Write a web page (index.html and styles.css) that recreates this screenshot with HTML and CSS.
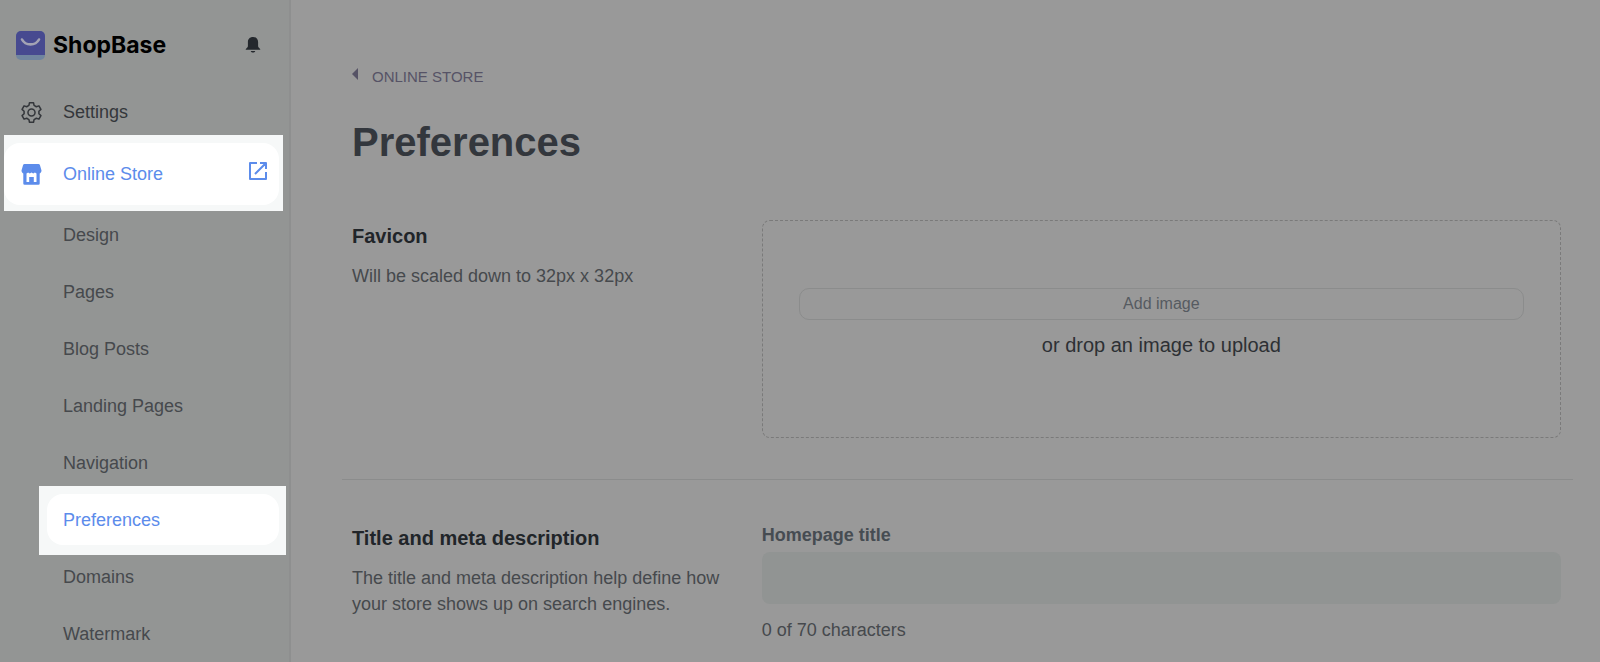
FILE: index.html
```
<!DOCTYPE html>
<html lang="en">

    <head>
        <meta charset="UTF-8">
        <meta name="viewport" content="width=device-width, initial-scale=1.0">
        <title>Preferences - ShopBase</title>

        <link rel="stylesheet" href="styles.css">
    </head>

    <body>
        <div class="layout">
            <aside class="sidebar">
                <div class="sidebar__head">
                    <a class="logo" href="#">
                        <svg class="logo__mark" viewBox="0 0 29 29" aria-hidden="true">
                            <rect width="29" height="29" rx="5" fill="#70859f" />
                            <path d="M5 0h19a5 5 0 0 1 5 5v19H0V5a5 5 0 0 1 5-5z" fill="#474a90" />
                            <path d="M6 8.500c3.500 6.500 13.500 6.500 17 0" fill="none" stroke="#a3a3b4" stroke-width="2.600" stroke-linecap="round" />
                        </svg>
                        <span>ShopBase</span>
                    </a>
                    <button class="bell" type="button" aria-label="Notifications">
                        <svg viewBox="0 0 16 16" aria-hidden="true">
                            <path d="M8 0C4.700 0 2.900 2.300 2.900 5v4.300C2.900 10.800.6 11.600.6 12.800h14.800c0-1.200-2.300-2-2.300-3.500V5C13.100 2.300 11.300 0 8 0zM5.700 13.900c.4 1.200 1.300 1.700 2.300 1.700s1.900-.5 2.300-1.700z" />
                        </svg>
                    </button>
                </div>

                <nav>
                    <ul class="menu">
                        <li>
                            <a class="menu__link" href="#">
                                <svg class="menu__icon menu__icon--gear" viewBox="1 1 22 22" aria-hidden="true">
                                    <path class="line" d="M9.300 4.600L9.900 1.800H14.100L14.700 4.600L17.060 5.960L19.780 5.080L21.880 8.720L19.760 10.640V13.360L21.880 15.280L19.780 18.920L17.060 18.040L14.700 19.400L14.100 22.200H9.900L9.300 19.400L6.940 18.040L4.220 18.920L2.120 15.280L4.240 13.360V10.640L2.120 8.720L4.220 5.080L6.940 5.960Z" />
                                    <circle class="line" cx="12" cy="12" r="3.700" />
                                </svg>
                                <span>Settings</span>
                            </a>
                        </li>
                        <li class="spotlight spotlight--top">
                            <a class="menu__link active" href="#">
                                <svg class="menu__icon" viewBox="0 0 20 21" aria-hidden="true">
                                    <path fill-rule="evenodd" d="M3 0h14a1.500 1.500 0 0 1 1.400 1L20 6.500c0 1.500-.7 2.500-1.800 2.900V19.500a1.300 1.300 0 0 1-1.300 1.300H3.100a1.300 1.300 0 0 1-1.300-1.300V9.400C.7 9 0 8 0 6.500L1.600 1A1.500 1.500 0 0 1 3 0zM5 9.500V18h2.700v-5h4.600v5H15V9.500l-1.600-1-1.700 1L10 8.500l-1.700 1-1.700-1z" />
                                </svg>
                                <span>Online Store</span>
                                <svg class="menu__open" viewBox="0 0 18 18" aria-hidden="true">
                                    <path class="line" d="M8 1H1v16h16v-7M11 1h6v6M17 1L6 12" />
                                </svg>
                            </a>
                        </li>
                    </ul>
                    <ul class="submenu">
                        <li><a class="submenu__link" href="#">Design</a></li>
                        <li><a class="submenu__link" href="#">Pages</a></li>
                        <li><a class="submenu__link" href="#">Blog Posts</a></li>
                        <li><a class="submenu__link" href="#">Landing Pages</a></li>
                        <li><a class="submenu__link" href="#">Navigation</a></li>
                        <li class="spotlight spotlight--sub"><a class="submenu__link active" href="#">Preferences</a></li>
                        <li><a class="submenu__link" href="#">Domains</a></li>
                        <li><a class="submenu__link" href="#">Watermark</a></li>
                    </ul>
                </nav>
            </aside>

            <main class="content">
                <header class="page-head">
                    <a class="back" href="#">
                        <svg viewBox="0 0 6 12" aria-hidden="true">
                            <path d="M6 0v12L0 6z" />
                        </svg>
                        <span>ONLINE STORE</span>
                    </a>
                    <h1>Preferences</h1>
                </header>

                <section class="row">
                    <div class="row__info">
                        <h2>Favicon</h2>
                        <p>Will be scaled down to 32px x 32px</p>
                    </div>
                    <div class="dropzone">
                        <button class="dropzone__btn" type="button">Add image</button>
                        <p>or drop an image to upload</p>
                    </div>
                </section>

                <section class="row">
                    <div class="row__info">
                        <h2>Title and meta description</h2>
                        <p>The title and meta description help define how your store shows up on search engines.</p>
                    </div>
                    <div class="field">
                        <label for="homepage-title">Homepage title</label>
                        <input type="text" id="homepage-title" maxlength="70">
                        <p>0 of 70 characters</p>
                    </div>
                </section>
            </main>
        </div>
    </body>

</html>
```
FILE: styles.css
```
* {
    margin: 0;
    padding: 0;
    box-sizing: border-box;
}

body {
    background-color: #999;
    color: #46494d;
    font-family: "Liberation Sans", Arial, sans-serif;
    font-size: 18px;
    line-height: 26px;
    overflow: hidden;
}

ul {
    list-style: none;
}

a {
    color: inherit;
    text-decoration: none;
}

button,
input {
    font: inherit;
    color: inherit;
}

svg {
    display: block;
    fill: currentColor;
    flex-shrink: 0;
}

.line {
    fill: none;
    stroke: currentColor;
    stroke-width: 2;
    stroke-linejoin: round;
}

.layout {
    display: grid;
    grid-template-columns: 291px 1fr;
    min-height: 100vh;
}

/* Sidebar */

.sidebar {
    background-color: #939594;
    border-right: 2px solid #8e8f8f;
}

.sidebar__head {
    display: flex;
    align-items: center;
    justify-content: space-between;
    height: 81px;
    padding: 9px 28px 0 16px;
}

.logo {
    display: flex;
    align-items: center;
    gap: 8px;
    color: #000;
    font-family: Inter, sans-serif;
    font-size: 23px;
    font-weight: 700;
}

.logo__mark {
    width: 29px;
    height: 29px;
}

.bell {
    background: none;
    border: 0;
    color: #24282d;
}

.bell svg {
    width: 16px;
    height: 16px;
}

.menu__link {
    display: flex;
    align-items: center;
    height: 62px;
    margin-right: 10px;
    padding: 0 12px 0 21px;
    border-radius: 16px;
    color: #34373b;
}

.menu__icon {
    width: 21px;
    height: 21px;
    margin-right: 21px;
}

.menu__icon--gear .line {
    stroke-width: 1.6;
}

.menu__open {
    width: 18px;
    height: 18px;
    margin: 0 0 6px auto;
}

.submenu {
    display: grid;
    gap: 6px;
    padding-top: 4px;
}

.submenu__link {
    display: flex;
    align-items: center;
    height: 51px;
    margin: 0 10px 0 47px;
    padding-left: 16px;
    border-radius: 16px;
}

.menu__link.active,
.submenu__link.active {
    background-color: #fff;
    color: #5c8ceb;
}

.spotlight {
    position: relative;
    z-index: 1;
}

.spotlight::before {
    content: "";
    position: absolute;
    z-index: -1;
    background-color: #f6f8f8;
}

.spotlight--top::before {
    inset: -8px 6px -6px 4px;
}

.spotlight--top .menu__link {
    margin-left: 4px;
    padding-left: 17px;
}

.spotlight--sub::before {
    inset: -8px 3px -10px 39px;
}

/* Page */

.content {
    padding: 64px 27px 0 51px;
}

.page-head {
    padding: 0 10px 54px;
}

.back {
    display: flex;
    gap: 14px;
    color: #565366;
    font-size: 15px;
}

.back svg {
    width: 6px;
    height: 12px;
    margin-top: 4px;
}

h1 {
    margin-top: 28px;
    color: #33373d;
    font-size: 40px;
    line-height: 48px;
}

h2 {
    margin-bottom: 11px;
    color: #212529;
    font-size: 20px;
    line-height: 32px;
}

.row {
    display: grid;
    grid-template-columns: 1fr 2fr;
    gap: 10px;
    padding: 0 12px 41px 10px;
}

.row + .row {
    padding-top: 42px;
    border-top: 1px solid #8b8c8c;
}

.dropzone {
    display: flex;
    flex-direction: column;
    align-items: center;
    justify-content: center;
    gap: 12px;
    min-height: 218px;
    padding: 0 36px 12px;
    border: 1px dashed #7a7a7a;
    border-radius: 8px;
    color: #2d3034;
    font-size: 20px;
}

.dropzone__btn {
    width: 100%;
    height: 32px;
    background: none;
    border: 1px solid #8b8c8c;
    border-radius: 10px;
    color: #565b61;
    font-size: 16px;
}

.field {
    display: grid;
    align-content: start;
}

.field label {
    color: #464c52;
    font-weight: 700;
}

.field input {
    width: 100%;
    height: 52px;
    margin: 4px 0 13px;
    padding: 0 16px;
    background-color: #919493;
    border: 0;
    border-radius: 8px;
}
```
